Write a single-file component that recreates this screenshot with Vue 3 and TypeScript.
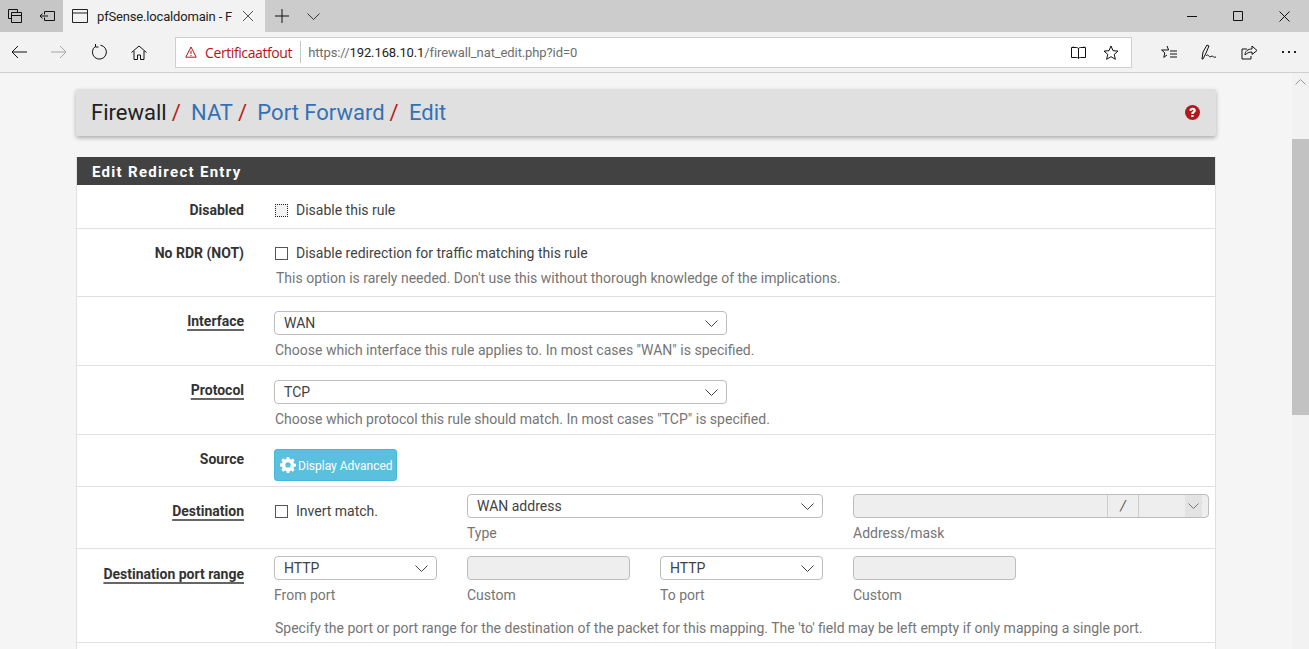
<script setup lang="ts">
const hint1 = 'This option is rarely needed. Don\'t use this without thorough knowledge of the implications.'
const hint2 = 'Choose which interface this rule applies to. In most cases "WAN" is specified.'
const hint3 = 'Choose which protocol this rule should match. In most cases "TCP" is specified.'
const hint4 = "Specify the port or port range for the destination of the packet for this mapping. The 'to' field may be left empty if only mapping a single port."
</script>

<template>
  <div class="window">
    <header class="titlebar">
      <div class="tb-left">
        <svg class="ic" width="16" height="16" viewBox="0 0 16 16"><path d="M1.500 1.500h9v3M1.500 1.500v9h3M4.500 4.500h10v10h-10zM4.500 7.500h10" fill="none" stroke="#111" /></svg>
        <svg class="ic ic2" width="16" height="16" viewBox="0 0 16 16"><path d="M5.500 3.500h10v9h-10v-3M5.500 3.500v3M1 8h8M3.500 5.500 1 8l2.500 2.500" fill="none" stroke="#111" /></svg>
      </div>
      <div class="tab">
        <svg width="16" height="14" viewBox="0 0 16 14"><path d="M.5.500h15v13H.5zM.5 4h15" fill="none" stroke="#222" /></svg>
        <span class="tab-title">pfSense.localdomain - F</span>
        <svg width="10" height="10" viewBox="0 0 10 10"><path d="M0 0l10 10M10 0L0 10" stroke="#555" fill="none" /></svg>
      </div>
      <div class="tab-actions">
        <svg width="14" height="14" viewBox="0 0 14 14"><path d="M7 0v14M0 7h14" stroke="#111" fill="none" /></svg>
        <svg width="13" height="7" viewBox="0 0 13 7"><path d="M.5.500l6 6 6-6" stroke="#333" fill="none" /></svg>
      </div>
      <div class="win-ctrl">
        <svg width="11" height="11" viewBox="0 0 11 11"><path d="M0 5.500h10" stroke="#111" fill="none" /></svg>
        <svg width="11" height="11" viewBox="0 0 11 11"><path d="M.5.500h9v9h-9z" stroke="#111" fill="none" /></svg>
        <svg width="11" height="11" viewBox="0 0 11 11"><path d="M.5.500l10 10M10.500.500l-10 10" stroke="#111" fill="none" /></svg>
      </div>
    </header>

    <nav class="toolbar">
      <div class="nav-btns">
        <svg width="16" height="14" viewBox="0 0 16 14"><path d="M16 7H1M7 1 1 7l6 6" stroke="#111" fill="none" /></svg>
        <svg width="16" height="14" viewBox="0 0 16 14"><path d="M0 7h15M9 1l6 6-6 6" stroke="#a5a5a5" fill="none" /></svg>
        <svg width="16" height="16" viewBox="0 0 16 16"><path d="M4.500 2.300A7 7 0 1 0 9.500 1.200M4.500 0v3h3" stroke="#111" fill="none" /></svg>
        <svg width="16" height="15" viewBox="0 0 16 15"><path d="M.5 7.500 8 1l7.500 6.500M3 6v8.500h3.500V10h3v4.500H13V6" stroke="#111" fill="none" /></svg>
      </div>
      <div class="address">
        <div class="cert">
          <svg width="12" height="12" viewBox="0 0 12 12"><path d="M6 1 .8 11.200h10.400zM6 4.500v3.500M6 9v1" stroke="#b5141c" fill="none" /></svg>
          <span>Certificaatfout</span>
        </div>
        <div class="url"><span class="muted">https://</span>192.168.10.1<span class="muted">/firewall_nat_edit.php?id=0</span></div>
        <svg class="addr-ic" width="15" height="13" viewBox="0 0 15 13"><path d="M.5 1.500h5c1 0 2 .5 2 1.500 0-1 1-1.500 2-1.500h5v10h-5c-1 0-2 .5-2 1 0-.5-1-1-2-1h-5zM7.500 3v9M2 .5v1M13 .5v1" stroke="#111" fill="none" /></svg>
        <svg class="addr-ic star" width="16" height="15" viewBox="0 0 16 15"><path d="M8 1l2 4.700 5 .4-3.800 3.300 1.200 4.900L8 11.700l-4.400 2.600 1.200-4.900L1 6.100l5-.4z" stroke="#111" fill="none" /></svg>
      </div>
      <div class="tools">
        <svg width="16" height="15" viewBox="0 0 16 15"><path d="M6 1 7.600 5h-7l3.200 2.800-1 4.600L6 10M9 6h7M9 9h7M9 12h7" stroke="#111" fill="none" /></svg>
        <svg width="16" height="16" viewBox="0 0 16 16"><path d="M1 15 2 8l4-7 2 1-3 7-3 6zM5 12c2-3 3 1 4 1s1-1 2-1 2 2 4 1" stroke="#111" fill="none" /></svg>
        <svg width="16" height="15" viewBox="0 0 16 15"><path d="M6 4H1v10h9v-3M4 10c0-4 3-6 7-6V1l5 4.500-5 4V7C8 7 6 8 4 10z" stroke="#111" fill="none" /></svg>
        <span class="dots"><i></i><i></i><i></i></span>
      </div>
    </nav>

    <div class="viewport">
      <main class="page">
        <div class="crumbs">
          <div class="crumb-list">
            <span class="crumb-first">Firewall</span><span class="sep">/</span>
            <a>NAT</a><span class="sep">/</span>
            <a>Port Forward</a><span class="sep">/</span>
            <a>Edit</a>
          </div>
          <svg class="help" width="15" height="15" viewBox="0 0 15 15"><circle cx="7.500" cy="7.500" r="7.500" fill="#b01a1a" /><path d="M4.300 5.600C4.500 3.700 5.800 2.800 7.600 2.800s3.200 1 3.200 2.700c0 2.100-2.300 2-2.300 3.600H6.300c0-2.500 2-2.300 2-3.500 0-.5-.3-.8-.8-.8s-.9.300-1 1.100zM6.300 9.900h2.200v2.100H6.300z" fill="#fff" /></svg>
        </div>

        <section class="panel">
          <h2 class="panel-head">Edit Redirect Entry</h2>

          <div class="row r-disabled">
            <div class="label">Disabled</div>
            <div class="field">
              <label class="check"><span class="box dotted"></span>Disable this rule</label>
            </div>
          </div>

          <div class="row r-nordr">
            <div class="label">No RDR (NOT)</div>
            <div class="field">
              <label class="check"><span class="box"></span>Disable redirection for traffic matching this rule</label>
              <p class="hint hint-tight">{{ hint1 }}</p>
            </div>
          </div>

          <div class="row r-select">
            <div class="label"><u>Interface</u></div>
            <div class="field">
              <div class="select wide">WAN<svg class="chev" width="13" height="7" viewBox="0 0 13 7"><path d="M.5.500l6 6 6-6" stroke="#444" fill="none" /></svg></div>
              <p class="hint">{{ hint2 }}</p>
            </div>
          </div>

          <div class="row r-select">
            <div class="label"><u>Protocol</u></div>
            <div class="field">
              <div class="select wide">TCP<svg class="chev" width="13" height="7" viewBox="0 0 13 7"><path d="M.5.500l6 6 6-6" stroke="#444" fill="none" /></svg></div>
              <p class="hint">{{ hint3 }}</p>
            </div>
          </div>

          <div class="row r-source">
            <div class="label">Source</div>
            <div class="field">
              <button class="btn" type="button">
                <svg width="16" height="16" viewBox="0 0 16 16"><path fill="#fff" fill-rule="evenodd" d="M6.700 0h2.600l.4 2.100 1.300.6 1.800-1.200 1.800 1.800-1.200 1.800.6 1.300 2 .4v2.600l-2 .4-.6 1.300 1.200 1.800-1.800 1.800-1.800-1.200-1.300.6-.4 2H6.700l-.4-2-1.300-.6-1.800 1.200-1.800-1.800 1.200-1.800-.6-1.300-2-.4V6.600l2-.4.6-1.300L1.400 3.100l1.800-1.800L5 2.500l1.300-.5zM8 5.300a2.700 2.700 0 1 0 0 5.400 2.700 2.700 0 0 0 0-5.400z" /></svg>
                <span class="btn-text">Display Advanced</span>
              </button>
            </div>
          </div>

          <div class="row r-dest">
            <div class="label"><u>Destination</u></div>
            <div class="field dest-grid">
              <label class="check invert"><span class="box"></span>Invert match.</label>
              <div class="col col-type">
                <div class="select">WAN address<svg class="chev" width="13" height="7" viewBox="0 0 13 7"><path d="M.5.500l6 6 6-6" stroke="#444" fill="none" /></svg></div>
                <p class="hint">Type</p>
              </div>
              <div class="col col-addr">
                <div class="addr-group">
                  <span class="ag-input"></span>
                  <span class="ag-slash">/</span>
                  <span class="ag-mask"><span class="ag-arrow"><svg width="11" height="6" viewBox="0 0 11 6"><path d="M.5.500l5 5 5-5" stroke="#777" fill="none" /></svg></span></span>
                </div>
                <p class="hint">Address/mask</p>
              </div>
            </div>
          </div>

          <div class="row r-ports">
            <div class="label"><u>Destination port range</u></div>
            <div class="field">
              <div class="port-grid">
                <div class="col">
                  <div class="select">HTTP<svg class="chev" width="13" height="7" viewBox="0 0 13 7"><path d="M.5.500l6 6 6-6" stroke="#444" fill="none" /></svg></div>
                  <p class="hint">From port</p>
                </div>
                <div class="col">
                  <div class="input-off"></div>
                  <p class="hint">Custom</p>
                </div>
                <div class="col">
                  <div class="select">HTTP<svg class="chev" width="13" height="7" viewBox="0 0 13 7"><path d="M.5.500l6 6 6-6" stroke="#444" fill="none" /></svg></div>
                  <p class="hint">To port</p>
                </div>
                <div class="col">
                  <div class="input-off"></div>
                  <p class="hint">Custom</p>
                </div>
              </div>
              <p class="hint hint-long">{{ hint4 }}</p>
            </div>
          </div>

          <div class="next-row"></div>
        </section>
      </main>

      <aside class="scrollbar">
        <div class="sb-up"><svg width="11" height="6" viewBox="0 0 11 6"><path d="M.5 5.500l5-5 5 5" stroke="#999" fill="none" /></svg></div>
        <div class="sb-thumb"></div>
      </aside>
    </div>
  </div>
</template>

<style>
html, body { margin: 0; overflow: hidden; }
</style>

<style scoped>
.window { width: 1309px; height: 649px; overflow: hidden; display: flex; flex-direction: column; font-family: Roboto, "Liberation Sans", sans-serif; background: #f5f5f5; }
svg { display: block; flex: none; }

.titlebar { height: 32px; flex: none; background: #cccccc; display: flex; align-items: stretch; }
.tb-left { width: 63px; background: #c6c6c6; display: flex; align-items: center; padding-left: 7px; gap: 16px; box-sizing: border-box; }
.tab { width: 202px; background: #f2f2f2; display: flex; align-items: center; padding: 0 12px 0 9px; box-sizing: border-box; gap: 9px; }
.tab-title { flex: 1; font: 13px Roboto, "Noto Sans", sans-serif; letter-spacing: -.17px; color: #222; white-space: nowrap; }
.tab-actions { display: flex; align-items: center; gap: 18px; padding-left: 10px; }
.win-ctrl { margin-left: auto; display: flex; align-items: center; gap: 35px; padding-right: 19px; }

.toolbar { height: 41px; flex: none; box-sizing: border-box; background: #f2f2f2; border-bottom: 1px solid #cfcfcf; display: flex; align-items: center; }
.nav-btns { width: 175px; display: flex; align-items: center; gap: 24px; padding-left: 11px; box-sizing: border-box; }
.address { width: 957px; height: 31px; box-sizing: border-box; background: #fff; border: 1px solid #cfcfcf; display: flex; align-items: center; }
.cert { display: flex; align-items: center; gap: 8px; padding: 0 8px 0 9px; height: 22px; border-right: 1px solid #c8c8c8; font: 14px "Open Sans", "Noto Sans", sans-serif; color: #b5141c; letter-spacing: -.4px; }
.url { flex: 1; padding-left: 7px; font: 13px Roboto, "Noto Sans", sans-serif; letter-spacing: -.1px; color: #222; }
.muted { color: #6e6e6e; }
.addr-ic { margin-right: 17px; }
.star { margin-right: 12px; }
.tools { flex: 1; display: flex; align-items: center; gap: 24px; padding-left: 29px; }
.dots { display: flex; gap: 4px; margin-left: 1px; }
.dots i { width: 2px; height: 2px; background: #222; display: block; }

.viewport { flex: 1; min-height: 0; display: flex; background: #f5f5f5; }
.page { width: 1140px; margin-left: 76px; padding-top: 16px; flex: none; }

.crumbs { height: 47px; box-sizing: border-box; background: #e0e0e0; border-radius: 2px; box-shadow: 0 2px 4px rgba(0,0,0,.3); display: flex; align-items: center; justify-content: space-between; padding: 0 16px 0 15px; }
.crumb-list { font-size: 22px; line-height: 47px; white-space: nowrap; }
.crumb-first { color: #212121; }
.crumb-list a { color: #3371b7; }
.sep { color: #b71c1c; margin: 0 10.300px 0 5px; }

.panel { margin-top: 21px; background: #fff; border: 1px solid #e0e0e0; border-top: 0; }
.panel-head { margin: 0; height: 28px; line-height: 31px; background: #424242; color: #fff; font-size: 15px; font-weight: 700; letter-spacing: 1.300px; padding-left: 15px; }

.row { display: flex; border-bottom: 1px solid #e0e0e0; box-sizing: border-box; font-size: 14px; color: #424242; }
.r-disabled { height: 44px; padding-top: 1px; }
.r-nordr { height: 68px; }
.r-select { height: 69px; }
.r-source { height: 52px; }
.r-dest { height: 62px; }
.r-ports { height: 94px; }
.next-row { height: 20px; }

.label { width: 167px; flex: none; text-align: right; font-weight: 700; color: #333; padding-top: 16px; line-height: 17px; white-space: nowrap; }
.r-ports .label { padding-top: 17px; }
.label u { text-decoration-thickness: 2px; text-underline-offset: 3px; text-decoration-color: #666; }

.field { margin-left: 30px; flex: 1; min-width: 0; }
.check { display: flex; align-items: center; gap: 8px; height: 17px; line-height: 17px; padding-top: 16px; color: #424242; }
.box { width: 11px; height: 11px; border: 1px solid #555; background: #fff; margin-left: 1px; box-sizing: content-box; }
.box.dotted { border: 1px dotted #222; background: #f2f2f2; }

.hint { margin: 7px 0 0 1px; font-size: 14px; line-height: 17px; color: #757575; white-space: nowrap; }
.hint-tight { margin: 8px 0 0 2px; }
.select { box-sizing: border-box; position: relative; height: 24px; width: 100%; border: 1px solid #bdbdbd; border-radius: 4px; background: #fff; padding-left: 9px; line-height: 22px; font-size: 14px; color: #424242; }
.select.wide { width: 453px; margin-top: 14px; }
.chev { position: absolute; right: 8px; top: 8px; }

.btn { margin-top: 14px; width: 123px; height: 32px; padding: 0 0 0 5px; display: flex; align-items: center; gap: 2px; background: #5bc0de; border: 1px solid #46b8da; border-radius: 3px; color: #fff; font: 12px Roboto, sans-serif; box-sizing: border-box; }
.btn-text { padding-top: 2px; }

.dest-grid { display: grid; grid-template-columns: 193px 356px 356px; column-gap: 0; }
.dest-grid .col { padding-top: 7px; }
.col-type { width: 356px; }
.col-addr { margin-left: 30px; }
.invert { padding-top: 16px; }
.addr-group { display: flex; height: 24px; width: 356px; box-sizing: border-box; border: 1px solid #bdbdbd; border-radius: 4px; background: #eee; overflow: hidden; }
.ag-input { flex: 1; }
.ag-slash { width: 30px; text-align: center; border-left: 1px solid #ccc; border-right: 1px solid #ccc; line-height: 22px; font-size: 14px; color: #555; font-style: italic; }
.ag-mask { width: 69px; display: flex; justify-content: flex-end; padding-right: 6px; box-sizing: border-box; }
.ag-arrow { width: 17px; background: #e3e3e3; display: flex; align-items: center; justify-content: center; }

.port-grid { display: grid; grid-template-columns: repeat(4, 163px); column-gap: 30px; padding-top: 7px; }
.input-off { height: 24px; box-sizing: border-box; border: 1px solid #bdbdbd; border-radius: 4px; background: #eee; }
.col .hint { margin-left: 0; }
.r-ports .col .hint { margin-top: 7px; }
.r-ports .hint-long { margin-top: 16px; }
.dest-grid .hint { margin-top: 7px; }

.scrollbar { width: 17px; margin-left: auto; background: #f2f2f2; flex: none; display: flex; flex-direction: column; }
.sb-up { height: 66px; display: flex; justify-content: center; padding-top: 6px; box-sizing: border-box; }
.sb-thumb { height: 276px; background: #c2c2c2; }
</style>
